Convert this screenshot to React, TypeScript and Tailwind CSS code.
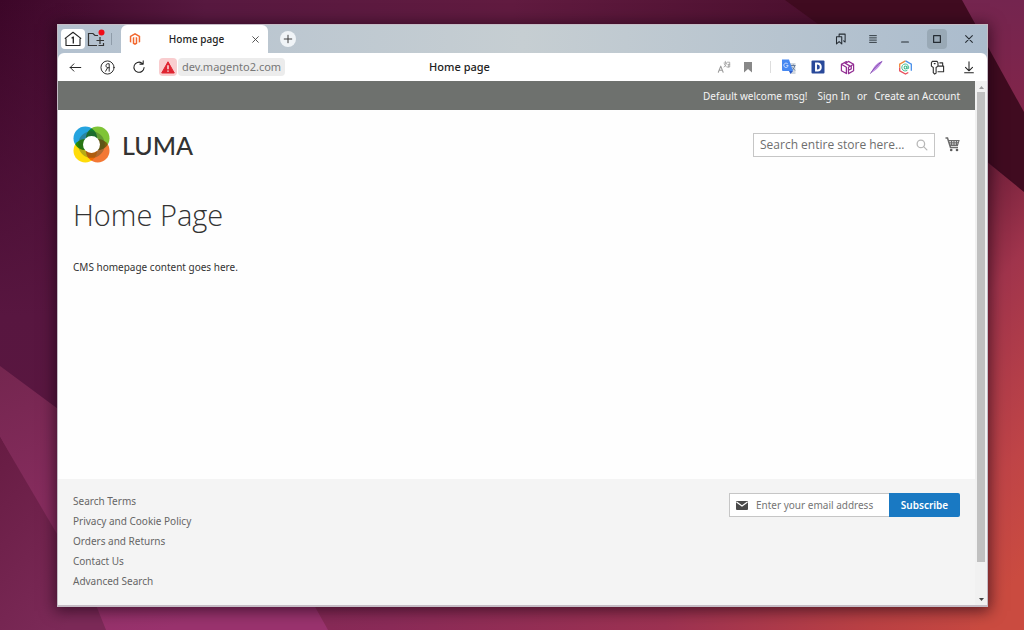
import type { ReactNode } from "react";
import { FaMagento } from "react-icons/fa";

function Wallpaper() {
  return (
    <svg
      className="absolute inset-0 h-full w-full"
      viewBox="0 0 1024 630"
      preserveAspectRatio="none"
      aria-hidden="true"
    >
      <defs>
        <linearGradient id="base" x1="0" y1="0" x2="1" y2="0">
          <stop offset="0" stopColor="#3c0628" />
          <stop offset="0.2" stopColor="#581940" />
          <stop offset="0.5" stopColor="#611b40" />
          <stop offset="0.8" stopColor="#4c102f" />
          <stop offset="1" stopColor="#3c0a20" />
        </linearGradient>
        <linearGradient id="leftSide" x1="0" y1="0" x2="0" y2="1">
          <stop offset="0" stopColor="#581640" stopOpacity="0" />
          <stop offset="0.5" stopColor="#581640" />
          <stop offset="1" stopColor="#5c1840" />
        </linearGradient>
        <linearGradient id="ribbon" x1="0" y1="0" x2="0.5" y2="1">
          <stop offset="0" stopColor="#74264f" />
          <stop offset="1" stopColor="#9a336e" />
        </linearGradient>
        <linearGradient id="corner" x1="0" y1="0" x2="0.6" y2="1">
          <stop offset="0" stopColor="#671c43" />
          <stop offset="1" stopColor="#7c2a58" />
        </linearGradient>
        <linearGradient id="floor" x1="0" y1="0" x2="1" y2="0">
          <stop offset="0" stopColor="#772552" />
          <stop offset="0.38" stopColor="#8b2b58" />
          <stop offset="0.65" stopColor="#9d3252" />
          <stop offset="0.85" stopColor="#bb4144" />
          <stop offset="1" stopColor="#cb4b40" />
        </linearGradient>
        <linearGradient id="rightSide" x1="0" y1="0" x2="0.15" y2="1">
          <stop offset="0" stopColor="#5f1834" />
          <stop offset="0.35" stopColor="#a0344c" />
          <stop offset="0.75" stopColor="#bf4447" />
          <stop offset="1" stopColor="#ca4b40" />
        </linearGradient>
        <linearGradient id="topRight" x1="0" y1="0" x2="0" y2="1">
          <stop offset="0" stopColor="#74254f" />
          <stop offset="1" stopColor="#82254a" />
        </linearGradient>
      </defs>
      <rect width="1024" height="630" fill="url(#base)" />
      <rect width="90" height="630" fill="url(#leftSide)" />
      <rect y="580" width="1024" height="50" fill="url(#floor)" />
      <path d="M0 366L100 440V580H300L328 630H105L0 437Z" fill="url(#ribbon)" />
      <path d="M0 437L90 590L106 630H0Z" fill="url(#corner)" />
      <path d="M785 0H965L1024 110V192L975 150L840 40Z" fill="#400b20" />
      <path d="M962 0H1024V112Z" fill="url(#topRight)" />
      <path d="M970 148L1024 192V630H970Z" fill="url(#rightSide)" />
    </svg>
  );
}

function IconButton({ label, className = "", children }: { label: string; className?: string; children: ReactNode }) {
  return (
    <button type="button" aria-label={label} className={`flex shrink-0 items-center justify-center ${className}`}>
      {children}
    </button>
  );
}

function Line({ size = 14, width = 1.2, className = "", children }: { size?: number; width?: number; className?: string; children: ReactNode }) {
  return (
    <svg
      width={size}
      height={size}
      viewBox="0 0 16 16"
      fill="none"
      stroke="currentColor"
      strokeWidth={width}
      strokeLinecap="round"
      strokeLinejoin="round"
      className={className}
      aria-hidden="true"
    >
      {children}
    </svg>
  );
}

function TabBar() {
  return (
    <div className="flex h-7 items-stretch justify-between bg-linear-to-r from-[#b3c1cf] via-[#c6ced2] to-[#abbccd]">
      <div className="flex">
        <div className="flex items-center pl-[3px]">
          <IconButton label="Pinned tabs, 1" className="h-5 w-6 rounded-sm bg-white text-[#222]">
            <svg width="18" height="16" viewBox="0 0 18 16" fill="none" stroke="currentColor" strokeLinejoin="round" aria-hidden="true">
              <path d="M2 7.5V14.500H16V7.500M.8 7.600L9 1.300L17.200 7.600" strokeWidth="1.100" />
              <path d="M7.600 7.200L9.300 6V12.500" strokeWidth="1.300" />
            </svg>
          </IconButton>
          <IconButton label="New tab group" className="h-6 w-6 text-[#333]">
            <svg width="20" height="20" viewBox="0 0 20 20" fill="none" stroke="currentColor" strokeWidth="1.200" aria-hidden="true">
              <path d="M10 16.500H1.500V4.500H6L8 6.500H11M13 8V15M9.500 11.500H17M11.500 16.500H16.500V14" />
              <circle cx="14.500" cy="3.500" r="3" fill="#f00d18" stroke="none" />
            </svg>
          </IconButton>
          <span className="ml-0.5 h-3 w-px bg-[#8f9ca9]" />
        </div>
        <div className="ml-[9px] flex w-[147px] items-center justify-between rounded-t-md bg-white pr-1 pl-2 text-[#222]">
          <FaMagento size={12} className="text-[#f2672e]" aria-hidden="true" />
          <span className="pl-1 font-['Noto_Sans',sans-serif] text-[10px] leading-4 font-medium">Home page</span>
          <IconButton label="Close tab" className="h-4 w-4 text-[#444]">
            <Line size={9} width={1.6}><path d="M3 3L13 13M13 3L3 13" /></Line>
          </IconButton>
        </div>
        <IconButton label="New tab" className="ml-3 h-4 w-4 self-center rounded-full bg-[#f0f4f7] text-[#333]">
          <Line size={10} width={1.5}><path d="M8 2V14M2 8H14" /></Line>
        </IconButton>
      </div>
      <div className="flex items-center gap-3 pr-2 text-[#252c33]">
        <IconButton label="Collections" className="h-5 w-5">
          <Line size={12} width={1.4}><path d="M2 5H9V14.500L5.500 11.500L2 14.500ZM5.500 5V1.500H13.500V12L11.500 10.500" /></Line>
        </IconButton>
        <IconButton label="Menu" className="h-5 w-5">
          <Line size={12} width={1.2}><path d="M3.500 3.500H12.500M3.500 6.500H12.500M3.500 9.500H12.500M3.500 12.500H12.500" /></Line>
        </IconButton>
        <IconButton label="Minimize" className="h-5 w-5">
          <Line size={12} width={1.6}><path d="M3.500 12H12.500" /></Line>
        </IconButton>
        <IconButton label="Maximize" className="h-5 w-5 rounded bg-[#99a9b6]">
          <Line size={12} width={1.6}><path d="M3.500 3.500H12.500V12.500H3.500Z" /></Line>
        </IconButton>
        <IconButton label="Close window" className="h-5 w-5">
          <Line size={12} width={1.4}><path d="M3.500 3.500L12.500 12.500M12.500 3.500L3.500 12.500" /></Line>
        </IconButton>
      </div>
    </div>
  );
}

function TranslateExtension() {
  return (
    <svg width="16" height="16" viewBox="0 0 16 16" aria-hidden="true">
      <path d="M7 4H14.500V15H10Z" fill="#d3d9e0" />
      <path d="M10 6.500H14.500M12.300 5.500V6.500M13.800 6.500C13.300 9 12 10.500 11 11.200M11.500 8.500L14 11.500" fill="none" stroke="#5c7597" strokeWidth=".9" />
      <path d="M1 .5H8L12 12H2Q1 12 1 11Z" fill="#4688f1" />
      <path d="M8 12H12L9.500 15Z" fill="#2a56c6" />
      <path d="M6.800 5A2.200 2.200 0 1 0 7.200 6.600H5.300" fill="none" stroke="#c9dcff" />
    </svg>
  );
}

function Toolbar() {
  return (
    <div className="bg-[#b3c1cf]">
      <div className="flex h-7 items-center rounded-t-md bg-white font-['Noto_Sans',sans-serif] text-[#222]">
        <div className="flex flex-1 items-center">
          <IconButton label="Back" className="ml-[7px] h-5 w-5">
            <Line size={13}><path d="M14.500 8H1.500M6 3.500L1.500 8L6 12.500" /></Line>
          </IconButton>
          <IconButton label="Yandex" className="ml-3 h-5 w-5">
            <Line size={15} width={1}>
              <circle cx="8" cy="8" r="7" />
              <path d="M9.800 12V4H8.400C5.700 4 5.700 8.200 8.400 8.200H9.800M8 8.400L6 12" />
            </Line>
          </IconButton>
          <IconButton label="Reload" className="ml-3 h-5 w-5">
            <Line size={14} width={1.2}><path d="M13.800 8.500A5.800 5.800 0 1 1 11 3.300L12.500 4.500M12.800 1V4.700H9" /></Line>
          </IconButton>
          <IconButton label="Connection is not secure" className="ml-2.5 h-[18px] w-[18px] rounded bg-[#f9cdcf]">
            <svg width="14" height="13" viewBox="0 0 14 13" aria-hidden="true">
              <path d="M7 .8L13.300 12H.7Z" fill="#df2431" stroke="#df2431" strokeLinejoin="round" />
              <path d="M7 4.200V8.200M7 9.500V10.800" stroke="#fff" strokeWidth="1.300" />
            </svg>
          </IconButton>
          <a href="#address" className="ml-px rounded bg-[#ececec] px-1 text-[11px] leading-[18px] text-[#777]">dev.magento2.com</a>
        </div>
        <span className="pr-[118px] text-[11px] leading-4 font-medium">Home page</span>
        <div className="flex flex-1 items-center justify-end pr-2">
          <IconButton label="Translate page" className="h-5 w-4 text-[#999]">
            <Line size={14} width={1.2}>
              <path d="M1.500 14L4.300 7L7 14M2.500 11.700H6.200" />
              <path d="M8 3.500H11M9.500 1.500V3.500M8 8C10 7 10.500 5 10.500 3.500M8.500 5L10.800 8M12 2.500H14.500V5H12.500M14.500 5V8H12M13 5.500V8" strokeWidth=".9" />
            </Line>
          </IconButton>
          <IconButton label="Bookmark" className="ml-2 h-5 w-4 text-[#888]">
            <svg width="10" height="12" viewBox="0 0 10 12" aria-hidden="true"><path d="M1 1H9V11.500L5 8L1 11.500Z" fill="currentColor" /></svg>
          </IconButton>
          <span className="mr-2 ml-3.5 h-3 w-px bg-[#ddd]" />
          <div className="flex items-center gap-[9px]">
            <IconButton label="Google Translate" className="h-5 w-5"><TranslateExtension /></IconButton>
            <IconButton label="Dictionary" className="h-5 w-5">
              <svg width="14" height="14" viewBox="0 0 14 14" aria-hidden="true">
                <rect x=".5" y=".5" width="13" height="13" rx="1" fill="#29499a" />
                <path d="M5 3.500V10.500H6.500Q9.800 10.500 9.800 7T6.500 3.500Z" fill="none" stroke="#fff" strokeWidth="1.900" />
              </svg>
            </IconButton>
            <IconButton label="Packages" className="h-5 w-5 text-[#922d93]">
              <Line size={15} width={1.3}><path d="M6.800 1.700L1.500 4.500V11.500L6.800 14.500V7.700L1.500 4.500M9 1.500L14.500 4.500V11.500L9 14.500V7.700L14.500 4.500M4.500 3L10 6M9 1.500L6.800 3M9 11L12 9.500V6.200" /></Line>
            </IconButton>
            <IconButton label="Feather" className="h-5 w-5">
              <svg width="15" height="15" viewBox="0 0 16 16" aria-hidden="true">
                <path d="M14.500 1C10 1.800 5.500 6 3.500 11L2 14L6 11.500C9 9.500 12.500 5.500 14.500 1Z" fill="#bf8be2" />
                <path d="M1.500 14.500C4 10 9 5 14 1.500" fill="none" stroke="#7a48a8" strokeWidth="1" />
              </svg>
            </IconButton>
            <IconButton label="Mail" className="h-5 w-5">
              <svg width="15" height="15" viewBox="0 0 16 16" fill="none" strokeWidth="1.400" aria-hidden="true">
                <path d="M1.800 8V4.500L8 1" stroke="#f28a3b" />
                <path d="M8 1L14.200 4.500V11.500" stroke="#4b90ea" />
                <path d="M1.800 8V11.500L8 15L11 13.300" stroke="#e8505b" />
                <circle cx="8" cy="8" r="1.500" stroke="#3cb98d" strokeWidth="1.100" />
                <path d="M9.600 6.400V8.500Q10.200 9.900 11.300 9A3.700 3.700 0 1 0 10 10.900" stroke="#3cb98d" strokeWidth="1" />
              </svg>
            </IconButton>
          </div>
          <IconButton label="Passwords" className="ml-3 h-5 w-5 text-[#333]">
            <Line size={15} width={1.2}><path d="M2.500 1.500H7.500L8.500 3V6.500L6.500 8V14L5 15L3.500 13.500V8L1.500 6.500V3ZM4.500 3.800H5.500M9 6.500H14.500V12.500H8.500M10.500 3H13.500V6.500" /></Line>
          </IconButton>
          <IconButton label="Downloads" className="ml-3 h-5 w-5">
            <Line size={14} width={1.2}><path d="M8 2V12M4 8.300L8 12.300L12 8.300M3 14.500H13" /></Line>
          </IconButton>
        </div>
      </div>
    </div>
  );
}

function LumaLogo() {
  return (
    <a href="#home" aria-label="Luma" className="flex items-center gap-3 text-[#333]">
      <svg width="37" height="37" viewBox="0 0 37 37" className="isolate" aria-hidden="true">
        <circle cx="12.300" cy="12.300" r="11.800" fill="#25a4df" className="mix-blend-multiply" />
        <circle cx="24.700" cy="12.300" r="11.800" fill="#7fc436" className="mix-blend-multiply" />
        <circle cx="12.300" cy="24.700" r="11.800" fill="#ffdc0a" className="mix-blend-multiply" />
        <circle cx="24.700" cy="24.700" r="11.800" fill="#f37835" className="mix-blend-multiply" />
        <circle cx="18.500" cy="18.500" r="10.800" fill="none" stroke="#2f4a2a" strokeOpacity=".35" strokeWidth="5" />
        <circle cx="18.500" cy="18.500" r="8.500" fill="#fff" />
      </svg>
      <span className="font-[Lato,sans-serif] text-[25px] leading-8 font-medium">LUMA</span>
    </a>
  );
}

function CartIcon() {
  return (
    <svg width="15" height="16" viewBox="0 0 15 16" fill="none" stroke="#6a6a6a" aria-hidden="true">
      <path d="M.5 1H2.500L5.500 10.500H13" strokeWidth="1.500" />
      <path d="M3.500 3.500H14L12.500 8.500H5M4 5.200H13.500M4.500 7H13M6.500 3V9M9 3V9M11.500 3V9" strokeWidth="1.100" />
      <circle cx="6.200" cy="13" r="1.300" fill="#5c5c5c" stroke="none" />
      <circle cx="12" cy="13" r="1.300" fill="#5c5c5c" stroke="none" />
    </svg>
  );
}

const footerLinks = ["Search Terms", "Privacy and Cookie Policy", "Orders and Returns", "Contact Us", "Advanced Search"];

function StorePage() {
  return (
    <div className="flex min-w-0 flex-1 flex-col bg-[#fefefe] font-['Noto_Sans',sans-serif] text-[10px] text-[#333]">
      <div className="flex h-[29px] items-center justify-end bg-[#6e716e] pr-[15px] leading-4 text-[#f4f4f4]">
        <span>Default welcome msg!</span>
        <a href="#sign-in" className="ml-2.5">Sign In</a>
        <span className="mx-[7px]">or</span>
        <a href="#create-account">Create an Account</a>
      </div>
      <header className="flex items-center justify-between px-[15px] pt-4">
        <LumaLogo />
        <div className="flex items-center gap-2.5">
          <form role="search" className="flex h-6 w-[182px] items-center border border-[#c6c6c6] bg-white px-1.5">
            <input
              type="search"
              aria-label="Search store"
              placeholder="Search entire store here..."
              className="min-w-0 flex-1 font-['Open_Sans',sans-serif] text-xs outline-none placeholder:text-[#6e6e6e]"
            />
            <IconButton label="Search" className="h-4 w-3 text-[#b8b8b8]">
              <Line size={12} width={1.7}><circle cx="6.500" cy="6.500" r="5" /><path d="M10.200 10.200L14.500 14.500" /></Line>
            </IconButton>
          </form>
          <a href="#cart" aria-label="My cart"><CartIcon /></a>
        </div>
      </header>
      <main className="flex-1 px-[15px] pt-8">
        <h1 className="font-['Open_Sans',sans-serif] text-[29px] leading-10 font-light">Home Page</h1>
        <p className="mt-6 leading-4">CMS homepage content goes here.</p>
      </main>
      <footer className="flex h-[126px] items-start justify-between bg-[#f4f4f4] pr-[15px] pl-[15px] text-[#666]">
        <ul className="pt-3 leading-5">
          {footerLinks.map((label) => (
            <li key={label}>
              <a href="#footer">{label}</a>
            </li>
          ))}
        </ul>
        <form className="mt-3.5 flex h-6">
          <label className="flex w-40 items-center gap-2 border border-r-0 border-[#c6c6c6] bg-white pl-1.5">
            <svg width="12" height="9" viewBox="0 0 12 9" className="shrink-0" aria-hidden="true">
              <rect width="12" height="9" rx="1" fill="#4a4a4a" />
              <path d="M.5 1L6 5L11.500 1" fill="none" stroke="#fff" strokeWidth="1.200" />
            </svg>
            <input
              type="email"
              aria-label="Email address"
              placeholder="Enter your email address"
              className="min-w-0 flex-1 leading-4 outline-none placeholder:text-[#757575]"
            />
          </label>
          <button type="button" className="w-[71px] rounded-r-xs bg-[#1979c3] leading-4 font-semibold text-white">Subscribe</button>
        </form>
      </footer>
    </div>
  );
}

function ScrollBar() {
  return (
    <div className="flex w-3 shrink-0 flex-col items-center bg-[#f1f1f1]" aria-hidden="true">
      <svg width="11" height="11" viewBox="0 0 11 11"><path d="M3 8L5.500 5L8 8Z" fill="#9c9c9c" /></svg>
      <div className="w-2 flex-1 bg-[#c0c0c0]" />
      <svg width="11" height="43" viewBox="0 0 11 43"><path d="M3 36L5.500 39L8 36Z" fill="#444" /></svg>
    </div>
  );
}

export default function App() {
  return (
    <div className="relative flex min-h-screen flex-col overflow-hidden bg-[#5c1840] pt-6 pr-9 pb-[23px] pl-[57px] font-['Open_Sans',sans-serif]">
      <Wallpaper />
      <div className="relative flex flex-1 flex-col border border-b-2 border-[#c5bcc5] shadow-[0_2px_14px_2px_rgba(20,0,15,0.6)]">
        <TabBar />
        <Toolbar />
        <div className="flex flex-1">
          <StorePage />
          <ScrollBar />
        </div>
      </div>
    </div>
  );
}
